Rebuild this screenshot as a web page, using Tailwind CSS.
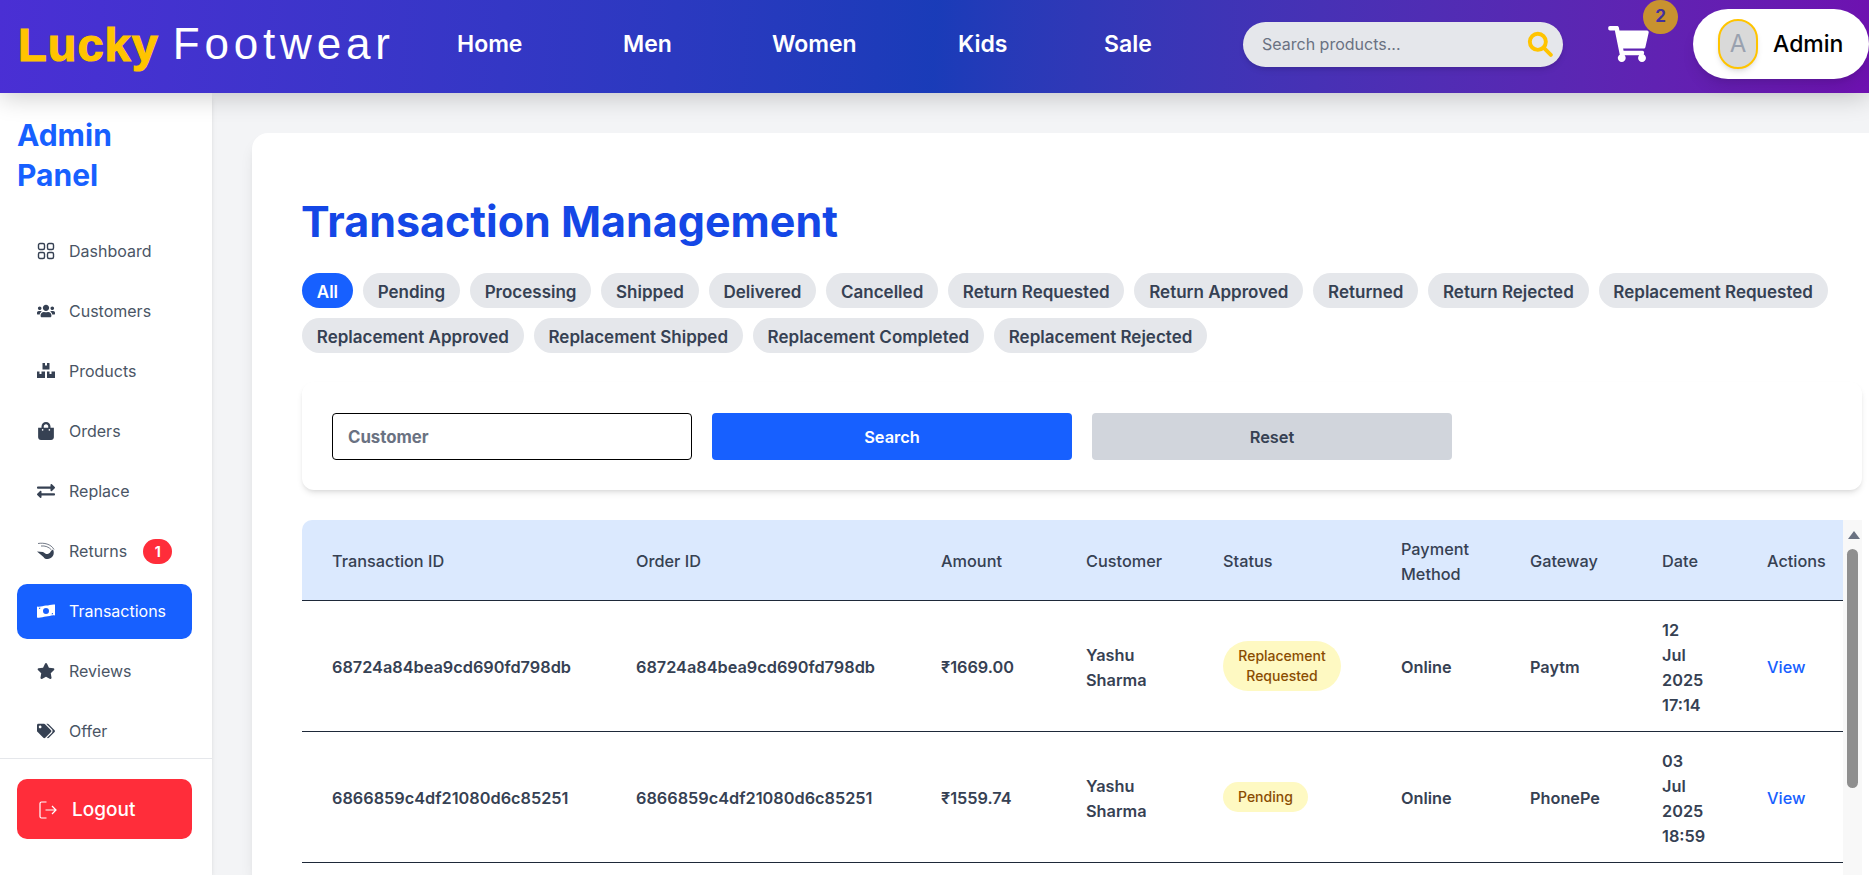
<!DOCTYPE html>
<html>
<head>
<meta charset="utf-8">
<script src="https://cdn.jsdelivr.net/npm/@tailwindcss/browser@4"></script>
</head>
<body class="h-[875px] overflow-hidden bg-gray-100 font-['Inter',sans-serif] text-gray-700">
<header class="relative z-20 box-border flex h-[93px] items-center bg-linear-[93deg] from-[#4a2fd4] via-blue-800 to-purple-800 pb-[5px] shadow-[0_4px_24px_rgba(0,0,0,0.2)]">
  <div class="ml-[18px] flex w-[440px] shrink-0 items-center whitespace-nowrap font-['Liberation_Sans',sans-serif] leading-none">
    <span class="text-[47px] font-bold tracking-[1px] text-[#ffc400] [-webkit-text-stroke:1.2px_#ffc400]">Lucky</span>
    <span class="ml-[14px] text-[44px] font-normal tracking-[4.8px] text-white">Footwear</span>
  </div>
  <nav class="ml-[-1px] flex w-[786px] shrink-0 items-center text-[23px] font-semibold text-white">
    <a class="w-[166px]">Home</a>
    <a class="w-[149px]">Men</a>
    <a class="w-[186px]">Women</a>
    <a class="w-[146px]">Kids</a>
    <a>Sale</a>
  </nav>
  <div class="flex h-[45px] w-[320px] shrink-0 items-center justify-between rounded-full bg-gray-200 pl-[19px] pr-[10px] text-[16px] text-gray-500 shadow-md">
    <span>Search products...</span>
    <svg class="h-[26px] w-[26px] text-[#ffc400]" viewBox="0 0 24 24" fill="none" stroke="currentColor" stroke-width="3.6" stroke-linecap="round"><circle cx="10" cy="10" r="7.4"/><path d="M16 16l6 6"/></svg>
  </div>
  <div class="relative ml-[45px] flex h-[70px] w-[85px] shrink-0 items-center">
    <svg class="h-[36px] w-[41px] text-white" viewBox="0 0 576 512" fill="currentColor"><path d="M528 301.3l47.3-208C578.7 78.2 567.2 64 551.8 64H159.2l-9.2-44.8C147.8 8 137.9 0 126.5 0H24C10.7 0 0 10.7 0 24v16c0 13.3 10.7 24 24 24h69.9l70.2 343.4C147.3 417.1 136 435.2 136 456c0 30.9 25.1 56 56 56s56-25.1 56-56c0-15.7-6.4-29.8-16.8-40h209.6C430.4 426.2 424 440.3 424 456c0 30.9 25.1 56 56 56s56-25.1 56-56c0-22.2-12.9-41.3-31.6-50.4l5.5-24.3c3.4-15-8-29.3-23.4-29.3H218.1l-6.5-32h293c11.2 0 20.9-7.8 23.4-18.7z"/></svg>
    <span class="absolute left-[35px] top-[-9px] flex h-[34px] w-[35px] items-center justify-center rounded-full bg-[#c8922f] text-[17px] font-bold text-[#43309f]">2</span>
  </div>
  <div class="flex h-[70px] w-[176px] shrink-0 items-center rounded-[35px] bg-white pl-[25px] shadow-lg">
    <span class="flex h-[50px] w-10 items-center justify-center rounded-full border-2 border-[#ffc400] bg-[#d9d9d9] text-[24px] text-gray-400 shadow-md">A</span>
    <span class="ml-[15px] text-[23px] font-medium text-black">Admin</span>
  </div>
</header>
<div class="flex h-[782px]">
  <aside class="z-10 flex w-[212px] shrink-0 flex-col bg-white shadow-md">
    <h2 class="px-[17px] pt-[22px] text-[30px] font-bold leading-[40px] text-[#1760ff]">Admin<br>Panel</h2>
    <ul class="mt-[26px] flex flex-col pl-[17px] pr-5 text-[16px] text-gray-600">
      <li class="flex h-[60px] items-center gap-[14px] pl-5">
        <svg class="h-[18px] w-[18px] text-gray-700" viewBox="0 0 18 18" fill="none" stroke="currentColor" stroke-width="1.4"><rect x="1.5" y="1.5" width="6" height="6" rx="1.5"/><rect x="10.5" y="1.5" width="6" height="6" rx="1.5"/><rect x="1.5" y="10.5" width="6" height="6" rx="1.5"/><rect x="10.5" y="10.5" width="6" height="6" rx="1.5"/></svg>
        Dashboard</li>
      <li class="flex h-[60px] items-center gap-[14px] pl-5">
        <svg class="h-[18px] w-[18px] text-gray-700" viewBox="0 0 640 512" fill="currentColor"><path d="M96 224c35.300 0 64-28.700 64-64s-28.700-64-64-64-64 28.700-64 64 28.700 64 64 64zm448 0c35.300 0 64-28.700 64-64s-28.700-64-64-64-64 28.700-64 64 28.700 64 64 64zm32 32h-64c-17.600 0-33.500 7.100-45.100 18.600 40.300 22.100 68.900 62 75.100 109.400h66c17.700 0 32-14.300 32-32v-32c0-35.300-28.700-64-64-64zm-256 0c61.900 0 112-50.100 112-112S381.900 32 320 32 208 82.100 208 144s50.100 112 112 112zm76.800 32h-8.300c-20.800 10-43.900 16-68.500 16s-47.600-6-68.500-16h-8.300C179.600 288 128 339.600 128 403.200V432c0 26.500 21.500 48 48 48h288c26.500 0 48-21.500 48-48v-28.800c0-63.600-51.600-115.200-115.200-115.200zm-223.700-13.400C161.500 263.100 145.600 256 128 256H64c-35.300 0-64 28.700-64 64v32c0 17.700 14.300 32 32 32h65.900c6.300-47.400 34.900-87.300 75.200-109.400z"/></svg>
        Customers</li>
      <li class="flex h-[60px] items-center gap-[14px] pl-5">
        <svg class="h-[18px] w-[18px] text-gray-700" viewBox="0 0 18 18" fill="currentColor"><path d="M5.500 1h2.500v2.500h2V1h2.500v6.500h-7zM0 9.500h2.500V12h2V9.500H8V16H0zM10 9.500h2.500V12h2V9.500H18V16h-8z"/></svg>
        Products</li>
      <li class="flex h-[60px] items-center gap-[14px] pl-5">
        <svg class="h-[18px] w-[18px] text-gray-700" viewBox="0 0 448 512" fill="currentColor"><path d="M352 160v-32C352 57.420 294.579 0 224 0 153.420 0 96 57.420 96 128v32H0v272c0 44.183 35.817 80 80 80h288c44.183 0 80-35.817 80-80V160h-96zm-192-32c0-35.290 28.710-64 64-64s64 28.710 64 64v32H160v-32zm160 120c-13.255 0-24-10.745-24-24s10.745-24 24-24 24 10.745 24 24-10.745 24-24 24zm-192 0c-13.255 0-24-10.745-24-24s10.745-24 24-24 24 10.745 24 24-10.745 24-24 24z"/></svg>
        Orders</li>
      <li class="flex h-[60px] items-center gap-[14px] pl-5">
        <svg class="h-[18px] w-[18px] text-gray-700" viewBox="0 0 512 512" fill="currentColor"><path d="M0 168v-16c0-13.255 10.745-24 24-24h360V80c0-21.367 25.899-32.042 40.971-16.971l80 80c9.372 9.373 9.372 24.569 0 33.941l-80 80C409.956 271.982 384 261.456 384 240v-48H24c-13.255 0-24-10.745-24-24zm488 152H128v-48c0-21.314-25.862-32.080-40.971-16.971l-80 80c-9.372 9.373-9.372 24.569 0 33.941l80 80C102.057 463.997 128 453.437 128 432v-48h360c13.255 0 24-10.745 24-24v-16c0-13.255-10.745-24-24-24z"/></svg>
        Replace</li>
      <li class="flex h-[60px] items-center gap-[14px] pl-5">
        <svg class="h-[18px] w-[18px] text-gray-700" viewBox="0 0 18 18"><path d="M1 1.500C7 .5 14 2 17 7.500" fill="none" stroke="currentColor" stroke-width="0.7"/><path d="M4 4C8 3.500 12 5 14.500 8" fill="none" stroke="currentColor" stroke-width="0.7"/><path d="M0 9.500l6 .5 3 2c2 0 4-.5 5-3l2-1.500c2 4 0 9-5 9.500-2.500.2-3.500-.5-4.500-2z" fill="currentColor"/></svg>
        Returns
        <span class="ml-[2px] flex h-[25px] w-[29px] items-center justify-center rounded-full bg-[#ff2d3a] text-[14px] font-bold text-white">1</span></li>
      <li class="my-[2.500px] flex h-[55px] items-center gap-[14px] rounded-[10px] bg-[#1760ff] pl-5 text-white">
        <svg class="h-[18px] w-[18px]" viewBox="0 0 18 14" fill="currentColor"><path fill-rule="evenodd" d="M0 2.500C3 3.500 6 1.500 9 1.500s6-1.500 9-1v11c-3-1-6 1-9 1s-6 2-9 1zM9 4a2.800 2.800 0 1 0 0 6 2.800 2.800 0 0 0 0-6zM2 5v-1.200h1.500A1.500 1.500 0 0 1 2 5zm14 4v1.200h-1.500A1.500 1.500 0 0 1 16 9z"/></svg>
        Transactions</li>
      <li class="flex h-[60px] items-center gap-[14px] pl-5">
        <svg class="h-[18px] w-[18px] text-gray-700" viewBox="0 0 576 512" fill="currentColor"><path d="M259.300 17.800L194 150.200 47.900 171.500c-26.200 3.800-36.700 36.100-17.700 54.600l105.700 103-25 145.500c-4.500 26.300 23.200 46 46.400 33.700L288 439.600l130.700 68.700c23.200 12.200 50.900-7.400 46.400-33.700l-25-145.500 105.700-103c19-18.500 8.500-50.800-17.700-54.600L382 150.200 316.700 17.800c-11.700-23.600-45.600-23.900-57.400 0z"/></svg>
        Reviews</li>
      <li class="flex h-[60px] items-center gap-[14px] pl-5">
        <svg class="h-[18px] w-[18px] text-gray-700" viewBox="0 0 640 512" fill="currentColor"><path d="M497.941 225.941L286.059 14.059A48 48 0 0 0 252.118 0H48C21.490 0 0 21.490 0 48v204.118a48 48 0 0 0 14.059 33.941l211.882 211.882c18.744 18.745 49.136 18.746 67.882 0l204.118-204.118c18.745-18.745 18.745-49.137 0-67.882zM112 160c-26.510 0-48-21.490-48-48s21.490-48 48-48 48 21.490 48 48-21.490 48-48 48zm513.941 133.823L421.823 497.941c-18.745 18.745-49.137 18.745-67.882 0l-.360-.360L527.640 323.522c16.999-16.999 26.360-39.600 26.360-63.640s-9.362-46.641-26.360-63.640L331.397 0h48.721a48 48 0 0 1 33.941 14.059l211.882 211.882c18.745 18.745 18.745 49.137 0 67.882z"/></svg>
        Offer</li>
    </ul>
    <div class="mt-[-3px] border-t border-gray-200 pl-[17px] pr-5 pt-5">
      <div class="flex h-[60px] items-center rounded-[10px] bg-[#ff2d3a] pl-[22px] pt-[2px] text-[19px] font-medium text-white">
        <svg class="mr-[15px] h-[18px] w-[18px]" viewBox="0 0 18 18" fill="none" stroke="currentColor" stroke-width="1.200"><path d="M7.500 1H2.500A1.500 1.500 0 0 0 1 2.500v13A1.500 1.500 0 0 0 2.500 17h5M6.500 9H17M13 5l4 4-4 4"/></svg>
        Logout
      </div>
    </div>
  </aside>
  <main class="min-w-0 flex-1 overflow-hidden pl-10 pt-10">
    <section class="h-[742px] rounded-tl-2xl bg-white pl-[50px] pr-[7px] pt-[64px] shadow-lg">
      <h1 class="ml-[-1px] text-[43px] font-bold leading-[48px] text-blue-700">Transaction Management</h1>
      <div class="mt-[28px] flex flex-wrap gap-[10px] text-[17px] font-semibold">
        <span class="flex h-[35px] items-center rounded-full bg-[#1760ff] px-[14.800px] pt-1 text-white">All</span>
        <span class="flex h-[35px] items-center rounded-full bg-gray-200 px-[14.800px] pt-1">Pending</span>
        <span class="flex h-[35px] items-center rounded-full bg-gray-200 px-[14.800px] pt-1">Processing</span>
        <span class="flex h-[35px] items-center rounded-full bg-gray-200 px-[14.800px] pt-1">Shipped</span>
        <span class="flex h-[35px] items-center rounded-full bg-gray-200 px-[14.800px] pt-1">Delivered</span>
        <span class="flex h-[35px] items-center rounded-full bg-gray-200 px-[14.800px] pt-1">Cancelled</span>
        <span class="flex h-[35px] items-center rounded-full bg-gray-200 px-[14.800px] pt-1">Return Requested</span>
        <span class="flex h-[35px] items-center rounded-full bg-gray-200 px-[14.800px] pt-1">Return Approved</span>
        <span class="flex h-[35px] items-center rounded-full bg-gray-200 px-[14.800px] pt-1">Returned</span>
        <span class="flex h-[35px] items-center rounded-full bg-gray-200 px-[14.800px] pt-1">Return Rejected</span>
        <span class="flex h-[35px] items-center rounded-full bg-gray-200 px-[14.800px] pt-1">Replacement Requested</span>
        <span class="flex h-[35px] items-center rounded-full bg-gray-200 px-[14.800px] pt-1">Replacement Approved</span>
        <span class="flex h-[35px] items-center rounded-full bg-gray-200 px-[14.800px] pt-1">Replacement Shipped</span>
        <span class="flex h-[35px] items-center rounded-full bg-gray-200 px-[14.800px] pt-1">Replacement Completed</span>
        <span class="flex h-[35px] items-center rounded-full bg-gray-200 px-[14.800px] pt-1">Replacement Rejected</span>
      </div>
      <div class="mt-[29px] flex h-[108px] items-center gap-5 rounded-xl bg-white px-[30px] shadow-md">
        <div class="flex h-[47px] w-[360px] items-center rounded-[4px] border border-black px-[15px] pt-[3px] text-[16.800px] font-bold text-gray-500">Customer</div>
        <div class="flex h-[47px] w-[360px] items-center justify-center rounded-[4px] bg-[#1760ff] pt-[2px] text-[16.400px] font-semibold text-white">Search</div>
        <div class="flex h-[47px] w-[360px] items-center justify-center rounded-[4px] bg-gray-300 pt-[2px] text-[16.400px] font-semibold">Reset</div>
      </div>
      <div class="mt-[30px] flex">
        <div class="w-[1541px] overflow-hidden">
          <table class="w-[1541px] table-fixed border-collapse text-left text-[16.300px] leading-[25px]">
            <thead class="bg-[#dbe9fe]">
              <tr class="h-[80px] border-b border-gray-800">
                <th class="w-[304px] rounded-tl-[10px] pl-[30px] pt-1 font-medium">Transaction ID</th>
                <th class="w-[305px] pl-[30px] pt-1 font-medium">Order ID</th>
                <th class="w-[145px] pl-[30px] pt-1 font-medium">Amount</th>
                <th class="w-[137px] pl-[30px] pt-1 font-medium">Customer</th>
                <th class="w-[178px] pl-[30px] pt-1 font-medium">Status</th>
                <th class="w-[129px] pl-[30px] pt-1 font-medium">Payment Method</th>
                <th class="w-[132px] pl-[30px] pt-1 font-medium">Gateway</th>
                <th class="w-[105px] pl-[30px] pt-1 font-medium">Date</th>
                <th class="pl-[30px] pt-1 font-medium">Actions</th>
              </tr>
            </thead>
            <tbody class="font-semibold">
              <tr class="h-[131px] border-b border-gray-800">
                <td class="pl-[30px] pt-1">68724a84bea9cd690fd798db</td>
                <td class="pl-[30px] pt-1">68724a84bea9cd690fd798db</td>
                <td class="pl-[30px] pt-1">₹1669.00</td>
                <td class="pl-[30px] pr-4 pt-1">Yashu Sharma</td>
                <td class="pl-[30px]"><span class="inline-block w-[118px] rounded-[25px] bg-yellow-100 py-[5px] text-center text-[14px] font-medium leading-[20px] text-yellow-800">Replacement Requested</span></td>
                <td class="pl-[30px] pt-1">Online</td>
                <td class="pl-[30px] pt-1">Paytm</td>
                <td class="pl-[30px] pr-10 pt-1">12 Jul 2025 17:14</td>
                <td class="pl-[30px] pt-1 font-medium text-[#1760ff]">View</td>
              </tr>
              <tr class="h-[131px] border-b border-gray-800">
                <td class="pl-[30px] pt-1">6866859c4df21080d6c85251</td>
                <td class="pl-[30px] pt-1">6866859c4df21080d6c85251</td>
                <td class="pl-[30px] pt-1">₹1559.74</td>
                <td class="pl-[30px] pr-4 pt-1">Yashu Sharma</td>
                <td class="pl-[30px]"><span class="inline-block rounded-[25px] bg-yellow-100 px-[15px] py-[5px] text-[14px] font-medium leading-[20px] text-yellow-800">Pending</span></td>
                <td class="pl-[30px] pt-1">Online</td>
                <td class="pl-[30px] pt-1">PhonePe</td>
                <td class="pl-[30px] pr-10 pt-1">03 Jul 2025 18:59</td>
                <td class="pl-[30px] pt-1 font-medium text-[#1760ff]">View</td>
              </tr>
            </tbody>
          </table>
        </div>
        <div class="h-[355px] w-[19px] bg-[#f8f8f8] pl-[4px] pt-[11px]">
          <svg class="ml-[1px] h-[8px] w-[12px] text-gray-500" viewBox="0 0 12 8" fill="currentColor"><path d="M6 0l6 8H0z"/></svg>
          <div class="mt-[10px] h-[239px] w-[11px] rounded-full bg-[#8f8f8f]"></div>
        </div>
      </div>
    </section>
  </main>
</div>
</body>
</html>
